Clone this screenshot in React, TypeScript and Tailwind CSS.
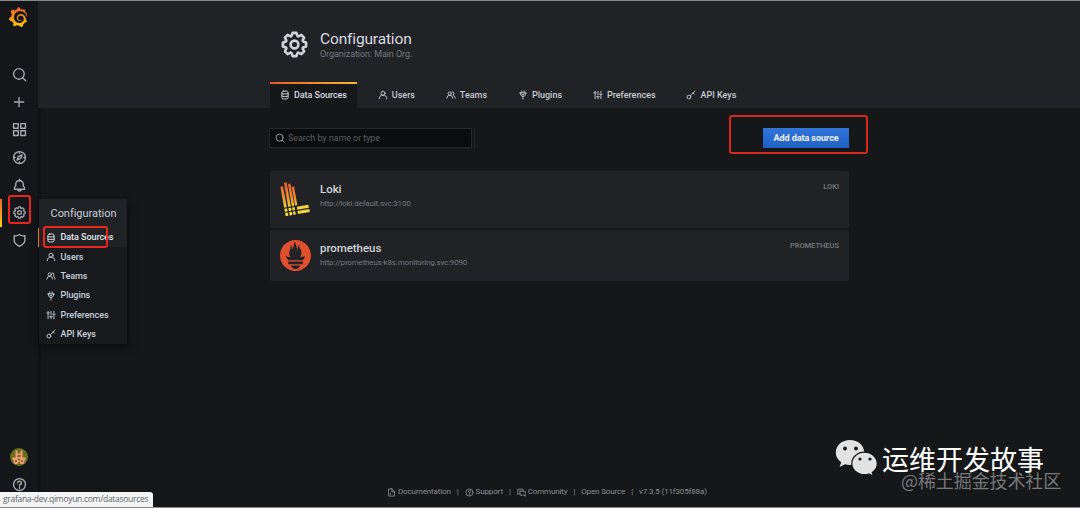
import type { ReactNode } from "react";
import { SiGrafana, SiPrometheus } from "react-icons/si";

type IconName =
  | "search"
  | "plus"
  | "apps"
  | "compass"
  | "bell"
  | "cog"
  | "shield"
  | "database"
  | "user"
  | "users"
  | "plug"
  | "sliders"
  | "key"
  | "file"
  | "question"
  | "comments";

const icons: Record<IconName, ReactNode> = {
  search: (
    <>
      <circle cx="11" cy="11" r="8.500" />
      <path d="M17.500 17.500l4.500 4.500" />
    </>
  ),
  plus: <path d="M12 4v16M4 12h16" />,
  apps: (
    <>
      <rect x="2.500" y="2.500" width="7.500" height="7.500" />
      <rect x="14" y="2.500" width="7.500" height="7.500" />
      <rect x="2.500" y="14" width="7.500" height="7.500" />
      <rect x="14" y="14" width="7.500" height="7.500" />
    </>
  ),
  compass: (
    <>
      <circle cx="12" cy="12" r="9.500" />
      <path d="M16 8l-2 5.500L8 16l2-5.500L16 8zM12 3v2M12 19v2M3 12h2M19 12h2" />
    </>
  ),
  bell: <path d="M12 2v3M4 18v-3l2-2v-3a6 6 0 0 1 12 0v3l2 2v3H4zM9 18.500a3.100 3.100 0 0 0 6 0" />,
  cog: (
    <path
      fill="currentColor"
      stroke="none"
      d="M21.32,9.55l-1.89-.63.89-1.78A1,1,0,0,0,20.13,6L18,3.87a1,1,0,0,0-1.15-.19l-1.78.89-.63-1.89A1,1,0,0,0,13.5,2h-3a1,1,0,0,0-.95.68L8.92,4.57,7.14,3.68A1,1,0,0,0,6,3.87L3.87,6a1,1,0,0,0-.19,1.15l.89,1.78-1.89.63A1,1,0,0,0,2,10.5v3a1,1,0,0,0,.68.95l1.89.63-.89,1.78A1,1,0,0,0,3.87,18L6,20.13a1,1,0,0,0,1.15.19l1.78-.89.63,1.89a1,1,0,0,0,.95.68h3a1,1,0,0,0,.95-.68l.63-1.89,1.78.89A1,1,0,0,0,18,20.13L20.13,18a1,1,0,0,0,.19-1.15l-.89-1.78,1.89-.63A1,1,0,0,0,22,13.5v-3A1,1,0,0,0,21.32,9.55ZM20,12.78l-1.2.4A2,2,0,0,0,17.64,16l.57,1.14-1.1,1.1L16,17.64a2,2,0,0,0-2.79,1.16l-.4,1.2H11.22l-.4-1.2A2,2,0,0,0,8,17.64l-1.14.57-1.1-1.1L6.36,16A2,2,0,0,0,5.2,13.18L4,12.78V11.22l1.2-.4A2,2,0,0,0,6.36,8L5.79,6.89l1.1-1.1L8,6.36A2,2,0,0,0,10.82,5.2l.4-1.2h1.56l.4,1.2A2,2,0,0,0,16,6.36l1.14-.57,1.1,1.1L17.64,8a2,2,0,0,0,1.16,2.79l1.2.4ZM12,8a4,4,0,1,0,4,4A4,4,0,0,0,12,8Zm0,6a2,2,0,1,1,2-2A2,2,0,0,1,12,14Z"
    />
  ),
  shield: <path d="M12 2.500c2.500 2 5.500 2.500 8.500 1.800V12c0 4-3 6.500-8.500 9.500C6.500 18.500 3.500 16 3.500 12V4.300C6.500 5 9.500 4.500 12 2.500z" />,
  database: (
    <>
      <rect x="4.500" y="2.500" width="15" height="19" rx="4" />
      <path d="M4.500 8.500c2 1.600 13 1.600 15 0M4.500 14.500c2 1.600 13 1.600 15 0" />
    </>
  ),
  user: (
    <>
      <circle cx="12" cy="8" r="5" />
      <path d="M3 21a9 9 0 0 1 18 0" />
    </>
  ),
  users: (
    <>
      <circle cx="9" cy="8.500" r="4" />
      <path d="M2 19.500a7 7 0 0 1 14 0M15 4.500a4 4 0 0 1 2 7.500 8 8 0 0 1 5 7.500" />
    </>
  ),
  plug: <path d="M4 7h16M9 2v5M15 2v5M6 7v4l3 4h6l3-4V7M12 15v7M10 11h4" />,
  sliders: <path d="M5 3v18M2 7h6M12 3v9M12 16v5M9 16h6M19 3v3M19 10v11M16 10h6" />,
  key: (
    <>
      <circle cx="7" cy="17" r="4.500" />
      <path d="M10.500 13.500L21.500 2.500M17 7l3 3" />
    </>
  ),
  file: <path d="M13 2.500H4v19h16V9.500L13 2.500zM13 3v7h7M9 14v4" />,
  question: (
    <>
      <circle cx="12" cy="12" r="9.500" />
      <path d="M9 9.500a3 3 0 1 1 3 3.200V14M12 16.500v1.500" />
    </>
  ),
  comments: <path d="M8 15H5l-3 3V3h14v5M8 8.500h14V22l-3-3H8V8.500z" />,
};

function Icon({ name, className }: { name: IconName; className: string }) {
  return (
    <svg
      viewBox="0 0 24 24"
      fill="none"
      stroke="currentColor"
      strokeWidth="2.200"
      strokeLinecap="round"
      strokeLinejoin="round"
      className={`shrink-0 ${className}`}
    >
      {icons[name]}
    </svg>
  );
}

const sideLinks: IconName[] = ["search", "plus", "apps", "compass", "bell", "cog", "shield"];

const pages: { label: string; icon: IconName }[] = [
  { label: "Data Sources", icon: "database" },
  { label: "Users", icon: "user" },
  { label: "Teams", icon: "users" },
  { label: "Plugins", icon: "plug" },
  { label: "Preferences", icon: "sliders" },
  { label: "API Keys", icon: "key" },
];

const footerLinks: { label: string; icon?: IconName }[] = [
  { label: "Documentation", icon: "file" },
  { label: "Support", icon: "question" },
  { label: "Community", icon: "comments" },
  { label: "Open Source" },
  { label: "v7.3.5 (11f305f88a)" },
];

function LokiLogo() {
  return (
    <svg viewBox="0 0 30 34" className="h-[34px] w-[30px]">
      <defs>
        <linearGradient id="loki" x1="0" y1="0" x2="0" y2="34" gradientUnits="userSpaceOnUse">
          <stop offset="0" stopColor="#e8562c" />
          <stop offset="0.5" stopColor="#ee9a35" />
          <stop offset="0.8" stopColor="#f6dc3c" />
        </linearGradient>
      </defs>
      <g fill="none" stroke="url(#loki)" strokeWidth="2.700">
        <path d="M1.700 4.500L7 34" />
        <path d="M5.300 0.500L11 33.300" />
        <path d="M9.200 1.800L14.600 32.600" strokeWidth="2.500" />
        <path d="M12.900 4.500L16.200 23.500" strokeWidth="2.300" />
      </g>
      {/* gaps that cut the stems into squares */}
      <path d="M2 26.600l15.500-2.700M3 30.700l15-2.600" stroke="#202226" strokeWidth="1.100" />
      <path d="M17 26.200L28.600 24.200M17.700 30.500L29.600 28.400" stroke="#f3d53b" strokeWidth="3" />
    </svg>
  );
}

function SideMenu() {
  return (
    <nav className="flex w-[38px] shrink-0 flex-col items-center bg-[#141619] pb-[15px] text-[#a8abb2] shadow-[1px_0_5px_#0b0c0e]">
      <div className="flex h-[60px] w-full pt-[6px] pl-[8px]">
        <svg viewBox="0 0 24 24" className="h-[20px] w-[20px]">
          <defs>
            <linearGradient id="grafana" x1="0" y1="0" x2="0" y2="1">
              <stop offset="0" stopColor="#f05a28" />
              <stop offset="1" stopColor="#fbca0a" />
            </linearGradient>
          </defs>
          <SiGrafana size={24} fill="url(#grafana)" />
        </svg>
      </div>
      {sideLinks.map((name) => (
        <div key={name} className="relative flex h-[27.600px] w-full items-center justify-center">
          {name === "cog" && (
            <span className="absolute left-0 h-full w-[1.500px] bg-linear-to-b from-[#f0672c] to-[#fbca0a]" />
          )}
          <Icon name={name} className={name === "plus" ? "h-[14px] w-[14px]" : "h-[15px] w-[15px]"} />
        </div>
      ))}
      <svg viewBox="0 0 18 18" className="mt-auto h-[18px] w-[18px]">
        <circle cx="9" cy="9" r="9" fill="#66701a" />
        <path d="M5.500 2.500h2v3h3v-3h2v7h3.500L13.500 16h-9L2 9.500h3.500z" fill="#ee9b78" />
        <path d="M7.500 7h3v2h-3zM5 12h2v2H5zM11 12h2v2h-2zM8 10.500h2v2H8zM8 14h2v2H8z" fill="#7b681f" />
      </svg>
      <Icon name="question" className="mt-[11px] h-[15px] w-[15px]" />
    </nav>
  );
}

function FlyoutMenu() {
  return (
    <div className="absolute top-[198px] left-[39px] w-[88px] bg-[#17191c] text-[#c7d0d9] shadow-[2px_3px_7px_#0b0c0e]">
      <div className="flex h-[29px] items-center bg-[#202226] pt-[1px] pl-[11.500px] text-[11px] tracking-[-0.030px]">
        Configuration
      </div>
      {pages.map((page, i) => (
        <div
          key={page.label}
          className={`flex h-[19.300px] items-center gap-[5px] pl-[6.500px] text-[9px] font-medium tracking-[-0.060px] whitespace-nowrap ${
            i === 0 ? "-ml-[1px] border-l-[1.500px] border-[#e8742c] bg-[#202226] text-[#e4e7eb]" : ""
          }`}
        >
          <Icon name={page.icon} className="h-[10px] w-[10px]" />
          <span className="pt-[1px]">{page.label}</span>
        </div>
      ))}
    </div>
  );
}

function PageHeader() {
  return (
    <header className="flex h-[107px] flex-col justify-between bg-[#202226] pl-[232px]">
      <div className="flex items-center gap-[10px] pt-[28px] pl-[9px]">
        <Icon name="cog" className="h-[31px] w-[31px] text-[#d0d3d8]" />
        <div>
          <h1 className="text-[15.500px] leading-[18px] tracking-[-0.150px] text-[#d8dbe0]">Configuration</h1>
          <div className="text-[9px] leading-[12px] tracking-[-0.080px] text-[#74787f]">Organization: Main Org.</div>
        </div>
      </div>
      <div className="flex h-[26px] gap-[10.900px] text-[9px] font-medium text-[#c7cad0]">
        {pages.map((page, i) => (
          <div
            key={page.label}
            className={`relative flex items-center gap-[4px] ${
              i === 0 ? "bg-[#161719] px-[10px] tracking-[-0.060px] text-[#d8dbe0]" : "px-[10px]"
            }`}
          >
            {i === 0 && (
              <span className="absolute inset-x-0 top-0 h-[2px] bg-linear-to-r from-[#e8582c] to-[#f4b92c]" />
            )}
            <Icon name={page.icon} className="h-[10px] w-[10px]" />
            <span className="pt-[2px]">{page.label}</span>
          </div>
        ))}
      </div>
    </header>
  );
}

function DataSource({ name, url, type, logo, className }: {
  name: string;
  url: string;
  type: string;
  logo: ReactNode;
  className: string;
}) {
  return (
    <li className={`flex rounded-[2px] bg-[#202226] px-[10px] ${className}`}>
      <div className="flex w-[40px] shrink-0">{logo}</div>
      <div className="flex-1">
        <div className="text-[11.500px] leading-[15px] font-medium tracking-[-0.050px] text-[#d0d3d8]">{name}</div>
        <div className="text-[8px] leading-[14px] tracking-[-0.175px] text-[#74787f]">{url}</div>
      </div>
      <div className="text-[7.500px] leading-[10px] font-medium text-[#777a80]">{type}</div>
    </li>
  );
}

function Footer() {
  return (
    <footer className="mt-auto mb-[8px] flex h-[14px] items-center pl-[349px] text-[8px] tracking-[-0.140px] text-[#8b8e94]">
      {footerLinks.map((link, i) => (
        <span key={link.label} className="flex items-center whitespace-nowrap">
          {i > 0 && <span className="mx-[6px]">|</span>}
          {link.icon && <Icon name={link.icon} className="mr-[2px] h-[9px] w-[9px]" />}
          {link.label}
        </span>
      ))}
    </footer>
  );
}

function Watermark() {
  return (
    <div className="absolute top-[438px] left-[835px] font-['Noto_Sans_CJK_SC',sans-serif]">
      <svg viewBox="0 0 43 38" className="h-[38px] w-[43px]">
        <path
          d="M15 1C7 1 .8 6.400.8 13.500c0 4 2 7.400 5.400 9.700L4.700 28l5.200-2.700c1.600.5 3.400.7 5.100.7 8 0 14.200-5.400 14.200-12.500S23 1 15 1z"
          fill="#e2e2e3"
        />
        <path
          d="M29.500 13.200c-7 0-12.700 4.900-12.700 11.200s5.700 11.200 12.700 11.200c1.500 0 3-.2 4.300-.6l4.700 2.300-1.300-3.900c3.200-2 5.100-5.200 5.100-9 0-6.300-5.800-11.200-12.800-11.200z"
          fill="#e2e2e3"
          stroke="#161719"
          strokeWidth="1.200"
        />
        <g fill="#161719">
          <circle cx="10" cy="9.500" r="1.900" />
          <circle cx="21" cy="9.500" r="1.900" />
          <circle cx="25" cy="20" r="1.600" />
          <circle cx="35" cy="20" r="1.600" />
        </g>
      </svg>
      <div className="absolute top-0 left-[47px] text-[27px] leading-[40px] whitespace-nowrap text-white">
        运维开发故事
      </div>
      <div className="absolute top-[29px] left-[66px] text-[18px] leading-[24px] tracking-[-0.100px] whitespace-nowrap text-[#77787a]">
        @稀土掘金技术社区
      </div>
    </div>
  );
}

export default function App() {
  return (
    <div className="relative flex h-[508px] w-[1080px] overflow-hidden border-y border-[#85888a] bg-[#161719] font-[Roboto,sans-serif]">
      <SideMenu />
      <main className="flex flex-1 flex-col">
        <PageHeader />
        <div className="mt-[20px] flex h-[20px] w-[811px] items-center pl-[231px]">
          <div className="flex h-full w-[203px] items-center gap-[3px] border border-[#25272b] bg-[#0b0c0e] pl-[5px] text-[9px] tracking-[-0.070px] text-[#5b5e64]">
            <Icon name="search" className="h-[10px] w-[10px] text-[#9fa2a8]" />
            <span className="pt-[1px]">Search by name or type</span>
          </div>
          <span className="ml-[2px] h-full w-px bg-[#25262d]" />
          <button className="ml-auto h-full w-[86px] bg-linear-to-b from-[#3274d9] to-[#1f60c4] pt-[2px] text-[9px] font-bold tracking-[-0.050px] text-[#eef3fb]">
            Add data source
          </button>
        </div>
        <ul className="mt-[23px] ml-[232px] flex w-[579px] flex-col gap-[2px]">
          <DataSource
            name="Loki"
            url="http://loki.default.svc:3100"
            type="LOKI"
            logo={<LokiLogo />}
            className="h-[57px] pt-[11px]"
          />
          <DataSource
            name="prometheus"
            url="http://prometheus-k8s.monitoring.svc:9090"
            type="PROMETHEUS"
            logo={<SiPrometheus className="-mt-[1px] h-[31px] w-[31px] text-[#e0502f]" />}
            className="h-[51px] pt-[11px]"
          />
        </ul>
        <Footer />
      </main>

      <FlyoutMenu />

      {/* highlighted steps */}
      <div className="absolute top-[194px] left-[8px] h-[29px] w-[23px] rounded-[3px] border-2 border-[#e8261c]" />
      <div className="absolute top-[225px] left-[43px] h-[22px] w-[65px] rounded-[3px] border-2 border-[#e8261c]" />
      <div className="absolute top-[114px] left-[729px] h-[39px] w-[139px] rounded-[3px] border-2 border-[#d6281f]" />

      <div className="absolute bottom-0 left-0 flex h-[15px] w-[153px] items-center rounded-tr-[3px] bg-[#f4f4f4] pl-[3px] font-['Open_Sans',sans-serif] text-[8.500px] tracking-[-0.290px] whitespace-nowrap text-[#5f6368]">
        grafana-dev.qimoyun.com/datasources
      </div>

      <Watermark />
    </div>
  );
}
